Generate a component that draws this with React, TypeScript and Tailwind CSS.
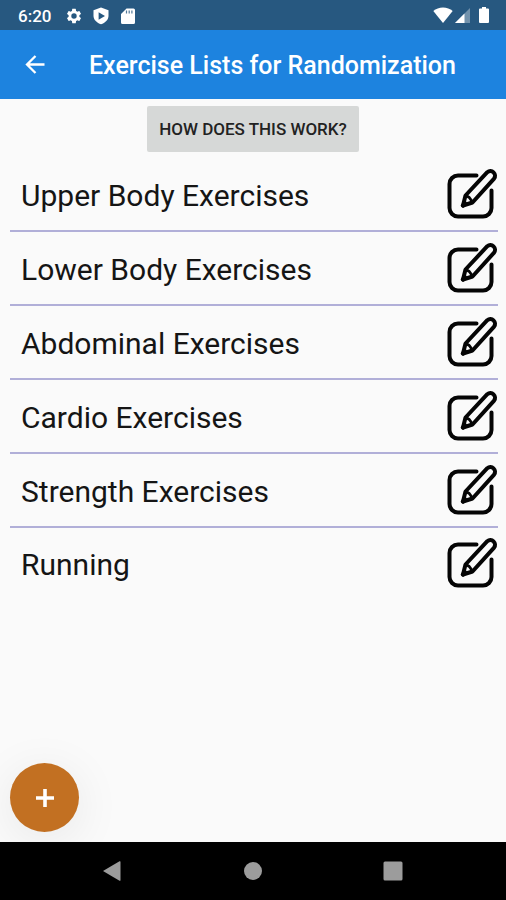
import React from 'react';

const lists = [
  'Upper Body Exercises',
  'Lower Body Exercises',
  'Abdominal Exercises',
  'Cardio Exercises',
  'Strength Exercises',
  'Running',
];

function EditIcon() {
  return (
    <svg width="52" height="54" viewBox="0 0 52 54" fill="none" stroke="#050505" strokeWidth="4" strokeLinecap="round" strokeLinejoin="round" aria-hidden="true">
      <path d="M30.500 8.500H12a8.500 8.500 0 0 0-8.500 8.500V41a8.500 8.500 0 0 0 8.500 8.500h25a8.500 8.500 0 0 0 8.500-8.500V23.500" />
      <path d="M19.500 28.500 41.300 5.200a4.700 4.700 0 0 1 6.800 6.400L26.500 35.500 17 38.500Z" />
      <path d="M20 28.500 23.300 30.500 26.500 35" strokeWidth="2.800" />
      <path d="M17 38.500 19 36.500" strokeWidth="4.500" />
    </svg>
  );
}

function StatusBar() {
  return (
    <div className="flex h-[30px] items-center justify-between bg-[#275880] pr-4 pl-[18px] text-white">
      <div className="flex items-center pt-0.5">
        <span className="w-[47px] text-[17px] leading-5 font-medium">6:20</span>
        <svg width="18" height="18" viewBox="0 0 24 24" fill="currentColor" aria-hidden="true">
          <path d="M19.14 12.94c.04-.3.06-.61.06-.94 0-.32-.02-.64-.07-.94l2.03-1.58a.49.49 0 0 0 .12-.61l-1.92-3.32a.488.488 0 0 0-.59-.22l-2.39.96c-.5-.38-1.03-.7-1.62-.94l-.36-2.54a.484.484 0 0 0-.48-.41h-3.84c-.24 0-.43.17-.47.41l-.36 2.54c-.59.24-1.13.57-1.62.94l-2.39-.96c-.22-.08-.47 0-.59.22L2.74 8.87c-.12.21-.08.47.12.61l2.03 1.58c-.05.3-.09.63-.09.94s.02.64.07.94l-2.03 1.58a.49.49 0 0 0-.12.61l1.92 3.32c.12.22.37.29.59.22l2.39-.96c.5.38 1.03.7 1.62.94l.36 2.54c.05.24.24.41.48.41h3.84c.24 0 .44-.17.47-.41l.36-2.54c.59-.24 1.13-.56 1.62-.94l2.39.96c.22.08.47 0 .59-.22l1.92-3.32c.12-.22.07-.47-.12-.61l-2.01-1.58zM12 15.6A3.6 3.6 0 1 1 12 8.4a3.6 3.6 0 0 1 0 7.2z" />
        </svg>
        <svg className="ml-2.5" width="16" height="18" viewBox="0 0 16 18" aria-hidden="true">
          <path d="M8 .5.500 3.300v5.500C.5 13 4 16 8 17.300c4-1.300 7.500-4.300 7.500-8.500V3.300Z" fill="currentColor" />
          <path d="M5.600 5.300 12 9l-6.400 3.700Z" fill="#275880" />
        </svg>
        <svg className="ml-3" width="14" height="18" viewBox="0 0 14 18" aria-hidden="true">
          <path d="M5.500 1.500h7A1.500 1.500 0 0 1 14 3v12.500a1.500 1.500 0 0 1-1.500 1.500h-11A1.500 1.500 0 0 1 0 15.500V7Z" fill="currentColor" />
          <path d="M5.500 3.500v3M8.200 3.500v3M10.900 3.500v3" stroke="#275880" strokeWidth="1.200" opacity=".8" />
        </svg>
      </div>
      <div className="flex items-center">
        <svg width="20" height="18" viewBox="0 0 20 18" fill="currentColor" aria-hidden="true">
          <path d="M10 17 .3 5C3 2.800 6.200 1.600 10 1.600S17 2.800 19.700 5Z" />
        </svg>
        <svg className="ml-[2px]" width="15" height="18" viewBox="0 0 15 18" fill="currentColor" aria-hidden="true">
          <path d="M0 17 15 2v15Z" opacity=".35" />
          <path d="M0 17 9.500 7.500V17Z" />
        </svg>
        <svg className="ml-2" width="12" height="18" viewBox="0 0 12 18" fill="currentColor" aria-hidden="true">
          <path d="M4 1h4v1.600h2a1 1 0 0 1 1 1V16a1 1 0 0 1-1 1H2a1 1 0 0 1-1-1V3.600a1 1 0 0 1 1-1h2Z" />
        </svg>
      </div>
    </div>
  );
}

export default function App() {
  return (
    <div className="flex min-h-screen flex-col bg-[#fafafa] font-['Roboto',sans-serif]">
      <StatusBar />

      <header className="flex h-[69px] items-center bg-[#1d83df] pl-6 text-white">
        <button type="button" aria-label="Back" className="mr-[42px]">
          <svg width="23" height="23" viewBox="0 0 23 23" fill="none" stroke="currentColor" strokeWidth="2.300" aria-hidden="true">
            <path d="M20.500 11.500H3M11.500 3 3 11.500l8.500 8.500" />
          </svg>
        </button>
        <h1 className="pt-0.5 text-[25px] leading-8 font-medium whitespace-nowrap">Exercise Lists for Randomization</h1>
      </header>

      <main className="flex flex-1 flex-col">
        <button type="button" className="mt-[7px] mb-1.5 self-center rounded-xs bg-[#d6d8d7] px-3 py-[11px] text-[17px] leading-6 font-medium text-[#222]">
          HOW DOES THIS WORK?
        </button>

        <ul className="pr-2 pl-2.5">
          {lists.map((name) => (
            <li key={name} className="flex h-[74px] items-center justify-between border-b-2 border-[#b1afd8] pl-[11px] last:border-b-0 last:pb-1">
              <span className="pt-1 text-[30px] leading-9 text-[#151515]">{name}</span>
              <button type="button" aria-label={`Edit ${name}`}>
                <EditIcon />
              </button>
            </li>
          ))}
        </ul>

        {/* add a new list */}
        <button type="button" aria-label="Add list" className="mt-auto mb-2.5 ml-2.5 flex size-[69px] items-center justify-center rounded-full bg-[#c27022] text-white shadow-[0_8px_48px_rgba(0,0,0,0.08)]">
          <svg width="18" height="18" viewBox="0 0 18 18" stroke="currentColor" strokeWidth="3.600" aria-hidden="true">
            <path d="M9 0v18M0 9h18" />
          </svg>
        </button>
      </main>

      <nav className="flex h-[58px] items-center justify-around bg-black px-[43px] text-[#9c9c9c]">
        <button type="button" aria-label="Back">
          <svg width="20" height="22" viewBox="0 0 20 22" fill="currentColor" aria-hidden="true">
            <path d="M0 11 16.500 1.300q1-.5 1 .7v18q0 1.200-1 .7Z" />
          </svg>
        </button>
        <button type="button" aria-label="Home">
          <svg width="18" height="18" viewBox="0 0 18 18" fill="currentColor" aria-hidden="true">
            <circle cx="9" cy="9" r="9" />
          </svg>
        </button>
        <button type="button" aria-label="Recent apps">
          <svg width="20" height="20" viewBox="0 0 20 20" fill="currentColor" aria-hidden="true">
            <rect x=".5" y=".5" width="19" height="19" rx="1.500" />
          </svg>
        </button>
      </nav>
    </div>
  );
}
